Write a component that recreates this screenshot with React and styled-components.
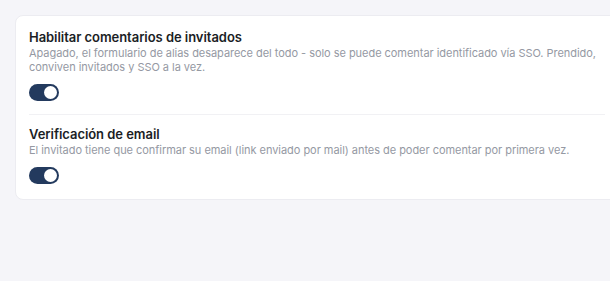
import React, { useState } from "react";
import styled, { createGlobalStyle } from "styled-components";

const GlobalStyle = createGlobalStyle`
  html, body {
    margin: 0;
    padding: 0;
    background: #f5f5f9;
    overflow: hidden;
  }
  body {
    font-family: Inter, "Noto Sans", sans-serif;
    -webkit-font-smoothing: antialiased;
  }
`;

const Page = styled.div`
  width: 610px;
  height: 281px;
  padding: 15px 0 0 15px;
  box-sizing: border-box;
`;

const Card = styled.section`
  width: 605px;
  box-sizing: border-box;
  background: #ffffff;
  border: 1px solid #ececf1;
  border-radius: 8px;
  padding: 2px 14px 1px 13px;
`;

const Row = styled.div`
  padding: 11px 0 ${(p) => (p.$last ? "14px" : "13px")};
  border-bottom: ${(p) => (p.$last ? "none" : "1px solid #f1f1f4")};
`;

const Title = styled.h3`
  margin: 0;
  font-size: 13px;
  line-height: 16px;
  font-weight: 600;
  letter-spacing: -0.05px;
  color: #1b1e25;
`;

const Description = styled.p`
  margin: 1px 0 0;
  font-size: 11px;
  line-height: 14px;
  letter-spacing: -0.04px;
  color: #9599a3;
`;

const Switch = styled.button`
  display: flex;
  align-items: center;
  justify-content: ${(p) => (p.$on ? "flex-end" : "flex-start")};
  width: 30px;
  height: 17px;
  margin-top: 10px;
  padding: 0 2px;
  box-sizing: border-box;
  border: none;
  border-radius: 9px;
  background: ${(p) => (p.$on ? "#233a5e" : "#d5d7dd")};
  cursor: pointer;
`;

const Knob = styled.span`
  width: 13px;
  height: 13px;
  border-radius: 50%;
  background: #ffffff;
`;

const settings = [
  {
    id: "guests",
    title: "Habilitar comentarios de invitados",
    text: "Apagado, el formulario de alias desaparece del todo - solo se puede comentar identificado vía SSO. Prendido, conviven invitados y SSO a la vez.",
  },
  {
    id: "email",
    title: "Verificación de email",
    text: "El invitado tiene que confirmar su email (link enviado por mail) antes de poder comentar por primera vez.",
  },
];

export default function App() {
  const [values, setValues] = useState({ guests: true, email: true });

  return (
    <Page>
      <GlobalStyle />
      <Card>
        {settings.map((s, i) => (
          <Row key={s.id} $last={i === settings.length - 1}>
            <Title>{s.title}</Title>
            <Description>{s.text}</Description>
            <Switch
              $on={values[s.id]}
              aria-pressed={values[s.id]}
              onClick={() => setValues({ ...values, [s.id]: !values[s.id] })}
            >
              <Knob />
            </Switch>
          </Row>
        ))}
      </Card>
    </Page>
  );
}
